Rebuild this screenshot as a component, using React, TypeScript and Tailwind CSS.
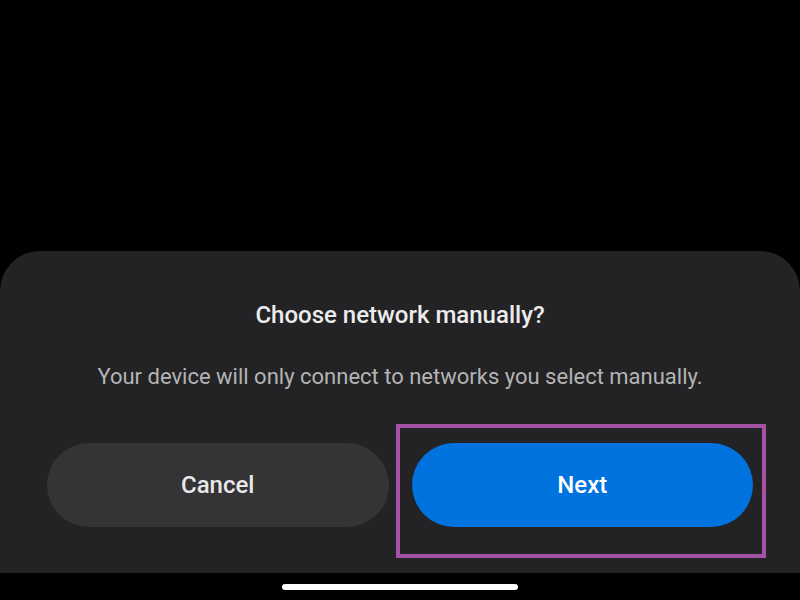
import React from "react";

const App: React.FC = () => {
  return (
    <div
      className="w-[800px] h-[600px] bg-black flex flex-col overflow-hidden"
      style={{ fontFamily: "Roboto, 'Liberation Sans', sans-serif" }}
    >
      <div className="flex-1" />

      <div className="h-[322px] bg-[#232325] rounded-t-[40px] flex flex-col items-center pt-[49px] px-[47px]">
        <h2 className="text-[24px] leading-[30px] font-medium text-[#ececec]">Choose network manually?</h2>
        <p className="mt-[33px] text-[22px] leading-[28px] text-[#b4b4b4]">
          Your device will only connect to networks you select manually.
        </p>

        <div className="mt-[52px] w-full flex gap-[23px]">
          <button className="flex-1 h-[84px] rounded-full bg-[#343436] text-[24px] font-medium text-[#e8e8e8]">
            Cancel
          </button>
          <div className="flex-1 relative">
            <button className="w-full h-[84px] rounded-full bg-[#0073df] text-[24px] font-medium text-white">
              Next
            </button>
            {/* highlight box */}
            <div className="absolute left-[-16px] right-[-13px] top-[-19px] bottom-[-31px] border-[4px] border-[#a552a5] pointer-events-none" />
          </div>
        </div>
      </div>

      <div className="h-[27px] flex items-center justify-center">
        <div className="w-[236px] h-[6px] rounded-full bg-white" />
      </div>
    </div>
  );
};

export default App;
